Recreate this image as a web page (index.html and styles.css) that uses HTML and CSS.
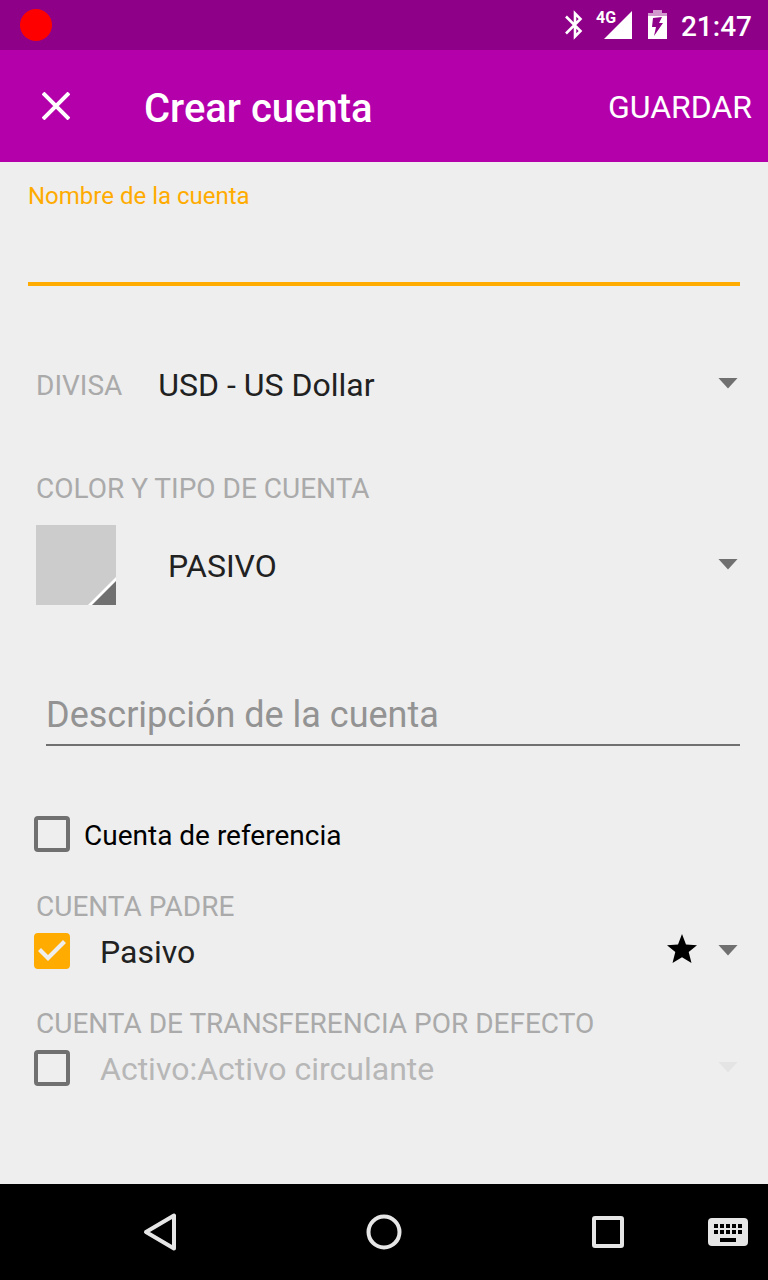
FILE: index.html
```html
<!DOCTYPE html>
<html lang="es">
<head>
<meta charset="utf-8">
<meta name="viewport" content="width=device-width, initial-scale=1">
<title>Crear cuenta</title>
<link rel="stylesheet" href="styles.css">
</head>
<body>
<div class="status-bar">
  <span class="record-dot"></span>
  <svg class="bluetooth" width="18" height="30" viewBox="0 0 18 30" fill="none" stroke="#fff" stroke-width="2.600" aria-hidden="true">
    <path d="M1 6.500L15.500 21L10 26.500V3.500L15.500 9L1 23.500"/>
  </svg>
  <div class="signal">
    <span class="signal-type">4G</span>
    <svg width="28" height="28" viewBox="0 0 28 28" aria-hidden="true"><path d="M28 0V28H0Z" fill="#fff"/></svg>
  </div>
  <svg class="battery" width="20" height="30" viewBox="0 0 20 30" aria-hidden="true">
    <path d="M5 0H14V3H19V6H0V3H5Z" fill="#fff" opacity=".6"/>
    <path fill="#fff" fill-rule="evenodd" d="M0 6H19V29H0ZM14 7L5 8L4 17H8L6 26L15 13H11Z"/>
  </svg>
  <time class="clock">21:47</time>
</div>
<header class="app-bar">
  <button class="close" type="button" aria-label="Cerrar">
    <svg width="28" height="28" viewBox="0 0 28 28" fill="none" stroke="#fff" stroke-width="4" aria-hidden="true"><path d="M1 1L27 27M27 1L1 27"/></svg>
  </button>
  <h1 class="title">Crear cuenta</h1>
  <button class="save" type="submit" form="account">GUARDAR</button>
</header>
<form class="form" id="account">
  <div class="name-field">
    <label class="name-label" for="name">Nombre de la cuenta</label>
    <input class="name-input" id="name" type="text">
  </div>
  <div class="currency-row">
    <label class="caption" for="currency">DIVISA</label>
    <div class="picker">
      <select class="picker-select" id="currency"><option>USD - US Dollar</option></select>
    </div>
  </div>
  <label class="caption type-caption" for="type">COLOR Y TIPO DE CUENTA</label>
  <div class="type-row">
    <button class="swatch" type="button" aria-label="Color de la cuenta">
      <svg width="80" height="80" viewBox="0 0 80 80" aria-hidden="true">
        <path d="M0 0H80V80H0Z" fill="#ccc"/>
        <path d="M80 52V80H52Z" fill="#fff"/>
        <path d="M80 56V80H56Z" fill="#707070"/>
      </svg>
    </button>
    <div class="picker">
      <select class="picker-select" id="type"><option>PASIVO</option></select>
    </div>
  </div>
  <input class="description" type="text" placeholder="Descripción de la cuenta" aria-label="Descripción de la cuenta">
  <label class="reference">
    <input class="check" type="checkbox">
    <span class="reference-text">Cuenta de referencia</span>
  </label>
  <label class="caption account-caption" for="parent">CUENTA PADRE</label>
  <div class="account-row">
    <input class="check" type="checkbox" checked aria-label="Cuenta padre">
    <div class="picker">
      <select class="picker-select" id="parent"><option>Pasivo</option></select>
      <svg class="star" width="30" height="30" viewBox="0 0 30 30" aria-hidden="true"><path d="M15 0L19 10.400L30 11.200L21.700 18L24.500 29L15 23.200L5.500 29L8.300 18L0 11.200L11 10.400Z"/></svg>
    </div>
  </div>
  <label class="caption account-caption" for="transfer">CUENTA DE TRANSFERENCIA POR DEFECTO</label>
  <div class="account-row">
    <input class="check" type="checkbox" aria-label="Cuenta de transferencia por defecto">
    <div class="picker picker-disabled">
      <select class="picker-select" id="transfer" disabled><option>Activo:Activo circulante</option></select>
    </div>
  </div>
</form>
<nav class="nav-bar">
  <button class="nav-button" type="button" aria-label="Atrás">
    <svg width="36" height="40" viewBox="0 0 36 40" fill="none" stroke="#e6e6e6" stroke-width="4" stroke-linejoin="round" aria-hidden="true"><path d="M32 3.500V36.500L4 20Z"/></svg>
  </button>
  <button class="nav-button" type="button" aria-label="Inicio">
    <svg width="36" height="36" viewBox="0 0 36 36" fill="none" stroke="#e6e6e6" stroke-width="4" aria-hidden="true"><circle cx="18" cy="18" r="15.500"/></svg>
  </button>
  <button class="nav-button" type="button" aria-label="Recientes">
    <svg width="32" height="32" viewBox="0 0 32 32" fill="none" stroke="#e6e6e6" stroke-width="4" aria-hidden="true"><rect x="2" y="2" width="28" height="28" rx="1"/></svg>
  </button>
  <button class="keyboard" type="button" aria-label="Teclado">
    <svg width="40" height="28" viewBox="0 0 40 28" aria-hidden="true">
      <rect width="40" height="28" rx="4" fill="#e6e6e6"/>
      <path d="M6 8H34M6 14H34" stroke="#000" stroke-width="4" stroke-dasharray="4 2"/>
      <path d="M12 22H28" stroke="#000" stroke-width="4"/>
    </svg>
  </button>
</nav>
</body>
</html>
```
FILE: styles.css
```css
* {
  box-sizing: border-box;
}

body {
  margin: 0;
  min-height: 100vh;
  display: flex;
  flex-direction: column;
  background: #eee;
  color: #212121;
  font-family: Roboto, "Noto Sans", sans-serif;
  font-size: 32px;
}

button,
input,
select {
  margin: 0;
  padding: 0;
  border: 0;
  border-radius: 0;
  background: none;
  color: inherit;
  font: inherit;
  outline: none;
}

svg {
  display: block;
}

.status-bar {
  display: flex;
  align-items: center;
  height: 50px;
  padding: 0 16px 0 20px;
  background: #8e0088;
  color: #fff;
}

.record-dot {
  width: 32px;
  height: 32px;
  margin-right: auto;
  border-radius: 50%;
  background: #f00;
}

.signal {
  display: flex;
  margin: 0 16px 0 13px;
}

.signal-type {
  width: 8px;
  font-size: 16px;
  font-weight: 700;
  line-height: 14px;
}

.clock {
  margin-left: 13px;
  padding-top: 2px;
  font-size: 28px;
  font-weight: 500;
}

.app-bar {
  display: flex;
  align-items: center;
  height: 112px;
  padding: 0 16px;
  background: #b400ab;
  color: #fff;
}

.close {
  width: 80px;
  height: 80px;
  display: grid;
  place-items: center;
}

.title {
  flex: 1;
  margin: 4px 0 0 48px;
  font-size: 40px;
  font-weight: 500;
}

.save {
  padding-top: 2px;
}

.form {
  flex: 1;
  display: flex;
  flex-direction: column;
  padding: 20px 28px;
}

.name-field {
  display: flex;
  flex-direction: column;
}

.name-label {
  color: #ffab00;
  font-size: 24px;
  line-height: 28px;
}

.name-input {
  height: 76px;
  border-bottom: 4px solid #ffab00;
  font-size: 36px;
}

.caption {
  padding-left: 8px;
  color: #aaa;
  font-size: 28px;
  line-height: 32px;
}

.picker {
  flex: 1;
  display: grid;
  align-items: center;
}

.picker-select {
  grid-area: 1 / 1;
  width: 100%;
  height: 48px;
  padding-top: 2px;
  appearance: none;
  opacity: 1;
}

.picker::after {
  content: "";
  grid-area: 1 / 1;
  justify-self: end;
  width: 20px;
  height: 11px;
  margin: 0 2px 2px 0;
  background: #707070;
  clip-path: polygon(0 0, 100% 0, 50% 100%);
  pointer-events: none;
}

.picker-disabled {
  color: #b7b7b7;
}

.picker-disabled::after {
  background: #e4e4e4;
}

.star {
  grid-area: 1 / 1;
  justify-self: end;
  margin: 0 43px 4px 0;
  fill: #000;
  pointer-events: none;
}

.currency-row {
  display: flex;
  align-items: center;
  gap: 36px;
  margin-top: 74px;
}

.currency-row .caption {
  padding-top: 4px;
}

.type-caption {
  margin-top: 65px;
}

.type-row {
  display: flex;
  align-items: center;
  gap: 52px;
  margin-top: 20px;
  padding-left: 8px;
}

.description {
  height: 54px;
  margin: 87px 0 0 18px;
  padding-bottom: 6px;
  border-bottom: 2px solid #707070;
  font-size: 36px;
}

.description::placeholder {
  color: #939393;
  opacity: 1;
}

.reference {
  display: flex;
  align-items: center;
  align-self: flex-start;
  gap: 14px;
  margin-top: 68px;
  padding-left: 6px;
  color: #000;
  font-size: 28px;
  line-height: 36px;
}

.reference-text {
  padding-top: 4px;
}

.check {
  flex: none;
  width: 36px;
  height: 36px;
  border: 4px solid #707070;
  border-radius: 4px;
  appearance: none;
}

.check:checked {
  border-color: #ffab00;
  background: #ffab00;
}

.check:checked::before {
  content: "";
  display: block;
  width: 28px;
  height: 28px;
  background: #eee;
  clip-path: polygon(0 14px, 3px 11px, 10px 18px, 25px 3px, 28px 6px, 10px 24px);
}

.account-caption {
  margin-top: 37px;
}

.account-row {
  display: flex;
  align-items: center;
  gap: 30px;
  height: 48px;
  margin-top: 4px;
  padding-left: 6px;
}

.account-row + .account-caption {
  margin-top: 33px;
}

.nav-bar {
  display: grid;
  grid-template-columns: 48px repeat(3, 1fr) 48px;
  align-items: center;
  height: 96px;
  background: #000;
}

.nav-button {
  height: 96px;
  display: grid;
  place-items: center;
}

.nav-button:first-child {
  grid-column: 2;
}

.keyboard {
  justify-self: end;
  margin-right: 20px;
}
```
